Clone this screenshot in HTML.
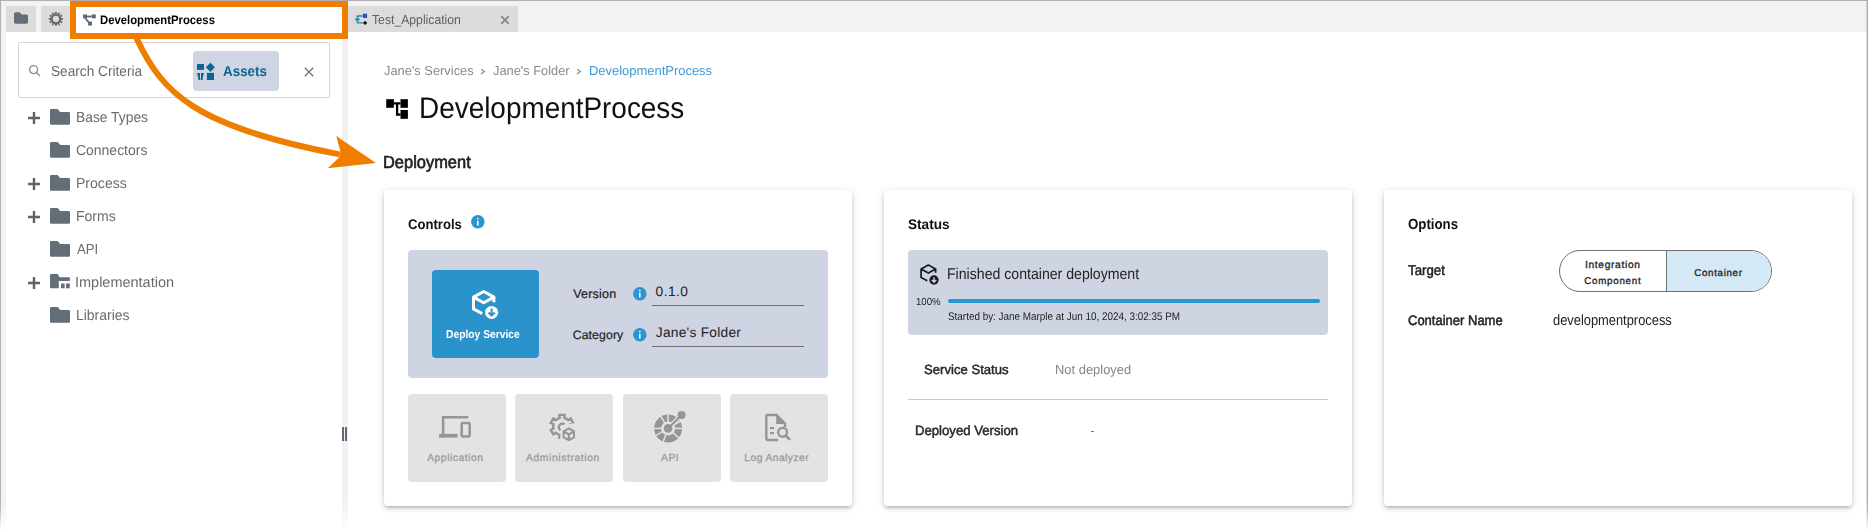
<!DOCTYPE html>
<html><head><meta charset="utf-8"><title>DevelopmentProcess</title>
<style>
html,body{margin:0;padding:0;}
body{width:1868px;height:529px;position:relative;overflow:hidden;background:#fff;font-family:'Liberation Sans', sans-serif;text-rendering:geometricPrecision;}
.a{position:absolute;box-sizing:border-box;}
.t{position:absolute;white-space:nowrap;line-height:1;font-family:'Liberation Sans', sans-serif;}
svg{position:absolute;overflow:visible;}
.card{position:absolute;background:#fff;border-radius:4px;box-shadow:0 3px 3px -2px rgba(0,0,0,.2),0 3px 4px 0 rgba(0,0,0,.14),0 1px 8px 0 rgba(0,0,0,.12);}
</style></head><body>

<div class="a" style="left:0;top:0;width:1868px;height:32px;background:#f2f2f2;"></div>
<div class="a" style="left:0;top:0;width:6px;height:529px;background:#f2f2f2;"></div>
<div class="a" style="left:6px;top:6px;width:30px;height:26px;background:#dcdcdc;"></div>
<div class="a" style="left:41px;top:6px;width:35px;height:26px;background:#dcdcdc;"></div>
<div class="a" style="left:70px;top:6px;width:278px;height:28px;background:#fff;"></div>
<div class="a" style="left:348px;top:6px;width:170px;height:26px;background:#dcdcdc;"></div>
<div class="a" style="left:342px;top:32px;width:6px;height:497px;background:#f1f1f1;"></div>
<div class="a" style="left:342px;top:427px;width:2px;height:14px;background:#5f6b78;"></div>
<div class="a" style="left:345px;top:427px;width:2px;height:14px;background:#5f6b78;"></div>
<div class="a" style="left:0;top:0;width:1868px;height:1px;background:#b2aeb2;"></div>
<div class="a" style="left:0;top:0;width:1px;height:529px;background:#b2aeb2;"></div>
<div class="a" style="left:1866px;top:0;width:1px;height:529px;background:rgba(110,100,110,0.22);"></div>
<div class="a" style="left:1867px;top:0;width:1px;height:529px;background:#aca8ac;"></div>
<svg style="left:14px;top:12.2px" width="14" height="12" viewBox="0 0 14 11.4"><path d="M1.5,0 H5.8 L7.6,2.3 H12.6 A1.4,1.4 0 0 1 14,3.7 V10 A1.4,1.4 0 0 1 12.6,11.4 H1.4 A1.4,1.4 0 0 1 0,10 V1.5 A1.5,1.5 0 0 1 1.5,0 Z" fill="#646e7a"/></svg>
<svg style="left:0;top:0" width="80" height="40"><path fill-rule="evenodd" d="M54.45,13.49 L55.08,13.36 L55.05,11.75 L56.75,11.75 L56.72,13.36 L57.35,13.49 L57.96,13.69 L58.74,12.28 L60.21,13.13 L59.38,14.51 L59.86,14.94 L60.29,15.42 L61.67,14.59 L62.52,16.06 L61.11,16.84 L61.31,17.45 L61.44,18.08 L63.05,18.05 L63.05,19.75 L61.44,19.72 L61.31,20.35 L61.11,20.96 L62.52,21.74 L61.67,23.21 L60.29,22.38 L59.86,22.86 L59.38,23.29 L60.21,24.67 L58.74,25.52 L57.96,24.11 L57.35,24.31 L56.72,24.44 L56.75,26.05 L55.05,26.05 L55.08,24.44 L54.45,24.31 L53.84,24.11 L53.06,25.52 L51.59,24.67 L52.42,23.29 L51.94,22.86 L51.51,22.38 L50.13,23.21 L49.28,21.74 L50.69,20.96 L50.49,20.35 L50.36,19.72 L48.75,19.75 L48.75,18.05 L50.36,18.08 L50.49,17.45 L50.69,16.84 L49.28,16.06 L50.13,14.59 L51.51,15.42 L51.94,14.94 L52.42,14.51 L51.59,13.13 L53.06,12.28 L53.84,13.69 Z M59.00,18.90 A3.1,3.1 0 1 0 52.80,18.90 A3.1,3.1 0 1 0 59.00,18.90 Z" fill="#6b6d6b"/></svg>
<svg style="left:83px;top:13.9px" width="13" height="12" viewBox="0 0 13 11.1">
<rect x="0" y="0" width="4" height="3.9" fill="#5f6a76"/><rect x="8.8" y="0" width="4" height="3.9" fill="#5f6a76"/>
<rect x="4" y="1.1" width="4.8" height="1.9" fill="#5f6a76"/><rect x="5.1" y="7.1" width="3.9" height="4" fill="#5f6a76"/>
<path d="M2.2,3.5 L6.2,8.4" stroke="#5f6a76" stroke-width="1.8"/></svg>
<div class="t" style="left:99.81px;top:14.00px;font-size:12.25px;font-weight:bold;color:#000;letter-spacing:0.000px;transform:scaleX(0.9224);transform-origin:0 0;">DevelopmentProcess</div>
<svg style="left:354px;top:12px" width="16" height="15" viewBox="0 0 16 15">
<path d="M3.4,5.5 V4 H8.6 M3.4,9.2 V10.9 H9" stroke="#3f74dc" stroke-width="1.4" fill="none"/>
<rect x="8.9" y="1.7" width="4.2" height="4.3" fill="#1f56d0"/>
<path d="M3.4,4.7 L6.1,7.4 L3.4,10.1 L0.7,7.4 Z" fill="#22a785"/>
<path d="M11.1,8.7 L13.3,10.9 L11.1,13.1 L8.9,10.9 Z" fill="#151515"/></svg>
<div class="t" style="left:371.97px;top:13.00px;font-size:13.0px;font-weight:normal;color:#5e5e5e;letter-spacing:0.000px;transform:scaleX(0.9389);transform-origin:0 0;">Test_Application</div>
<svg style="left:500px;top:15px" width="10" height="10" viewBox="0 0 10 10"><path d="M1.2,1.2 L8.8,8.8 M8.8,1.2 L1.2,8.8" stroke="#838a93" stroke-width="1.9"/></svg>
<div class="a" style="left:18px;top:42px;width:312px;height:56px;border:1px solid #d4d4d6;border-radius:2px;"></div>
<svg style="left:28px;top:64px" width="14" height="14" viewBox="0 0 14 14"><circle cx="5.6" cy="5.6" r="4.0" stroke="#8b9099" stroke-width="1.4" fill="none"/><path d="M8.5,8.5 L12,12" stroke="#8b9099" stroke-width="1.5"/></svg>
<div class="t" style="left:50.91px;top:65.00px;font-size:14.5px;font-weight:normal;color:#6b6b6b;letter-spacing:0.000px;transform:scaleX(0.9425);transform-origin:0 0;">Search Criteria</div>
<div class="a" style="left:193px;top:51px;width:86px;height:40px;background:#cfd5e3;border-radius:4px;"></div>
<svg style="left:197px;top:62px" width="18" height="18" viewBox="0 0 18 18">
<rect x="0" y="2" width="7" height="5.9" fill="#0e6494"/>
<path d="M13.4,0.7 L17.95,5.3 L13.4,9.9 L8.85,5.3 Z" fill="#0e6494"/>
<rect x="9.9" y="10.9" width="7.1" height="7.1" fill="#0e6494"/>
<path d="M0,11 H3 Q2.9,14.5 3.2,18 H1.4 Q1.3,14.5 0,11 Z M7,11 H4 Q4.1,14.5 3.8,18 H5.6 Q5.7,14.5 7,11 Z" fill="#0e6494"/>
</svg>
<div class="t" style="left:223.25px;top:65.00px;font-size:14.25px;font-weight:bold;color:#0e6494;letter-spacing:0.000px;transform:scaleX(0.9417);transform-origin:0 0;">Assets</div>
<svg style="left:304px;top:67px" width="10" height="10" viewBox="0 0 10 10"><path d="M0.8,0.8 L9.2,9.2 M9.2,0.8 L0.8,9.2" stroke="#737373" stroke-width="1.3"/></svg>
<svg style="left:28px;top:111.5px" width="12" height="12" viewBox="0 0 12 12"><path d="M6,0 V12 M0,6 H12" stroke="#626262" stroke-width="2.4"/></svg>
<svg style="left:50px;top:109px" width="20" height="16" viewBox="0 0 20 16"><path d="M1.2,0 H7.6 L10.2,3 H18.8 A1.2,1.2 0 0 1 20,4.2 V14.6 A1.2,1.2 0 0 1 18.8,15.8 H1.2 A1.2,1.2 0 0 1 0,14.6 V1.2 A1.2,1.2 0 0 1 1.2,0 Z" fill="#646e78"/></svg>
<div class="t" style="left:75.78px;top:111.00px;font-size:14.5px;font-weight:normal;color:#6b6b6b;letter-spacing:0.000px;transform:scaleX(0.9536);transform-origin:0 0;">Base Types</div>
<svg style="left:50px;top:142px" width="20" height="16" viewBox="0 0 20 16"><path d="M1.2,0 H7.6 L10.2,3 H18.8 A1.2,1.2 0 0 1 20,4.2 V14.6 A1.2,1.2 0 0 1 18.8,15.8 H1.2 A1.2,1.2 0 0 1 0,14.6 V1.2 A1.2,1.2 0 0 1 1.2,0 Z" fill="#646e78"/></svg>
<div class="t" style="left:76.13px;top:144.00px;font-size:14.5px;font-weight:normal;color:#6b6b6b;letter-spacing:0.000px;transform:scaleX(0.9626);transform-origin:0 0;">Connectors</div>
<svg style="left:28px;top:177.5px" width="12" height="12" viewBox="0 0 12 12"><path d="M6,0 V12 M0,6 H12" stroke="#626262" stroke-width="2.4"/></svg>
<svg style="left:50px;top:175px" width="20" height="16" viewBox="0 0 20 16"><path d="M1.2,0 H7.6 L10.2,3 H18.8 A1.2,1.2 0 0 1 20,4.2 V14.6 A1.2,1.2 0 0 1 18.8,15.8 H1.2 A1.2,1.2 0 0 1 0,14.6 V1.2 A1.2,1.2 0 0 1 1.2,0 Z" fill="#646e78"/></svg>
<div class="t" style="left:75.76px;top:177.00px;font-size:14.5px;font-weight:normal;color:#6b6b6b;letter-spacing:0.000px;transform:scaleX(0.9685);transform-origin:0 0;">Process</div>
<svg style="left:28px;top:210.5px" width="12" height="12" viewBox="0 0 12 12"><path d="M6,0 V12 M0,6 H12" stroke="#626262" stroke-width="2.4"/></svg>
<svg style="left:50px;top:208px" width="20" height="16" viewBox="0 0 20 16"><path d="M1.2,0 H7.6 L10.2,3 H18.8 A1.2,1.2 0 0 1 20,4.2 V14.6 A1.2,1.2 0 0 1 18.8,15.8 H1.2 A1.2,1.2 0 0 1 0,14.6 V1.2 A1.2,1.2 0 0 1 1.2,0 Z" fill="#646e78"/></svg>
<div class="t" style="left:75.76px;top:210.00px;font-size:14.5px;font-weight:normal;color:#6b6b6b;letter-spacing:0.000px;transform:scaleX(0.9658);transform-origin:0 0;">Forms</div>
<svg style="left:50px;top:241px" width="20" height="16" viewBox="0 0 20 16"><path d="M1.2,0 H7.6 L10.2,3 H18.8 A1.2,1.2 0 0 1 20,4.2 V14.6 A1.2,1.2 0 0 1 18.8,15.8 H1.2 A1.2,1.2 0 0 1 0,14.6 V1.2 A1.2,1.2 0 0 1 1.2,0 Z" fill="#646e78"/></svg>
<div class="t" style="left:76.85px;top:243.00px;font-size:14.5px;font-weight:normal;color:#6b6b6b;letter-spacing:0.000px;transform:scaleX(0.9062);transform-origin:0 0;">API</div>
<svg style="left:28px;top:276.5px" width="12" height="12" viewBox="0 0 12 12"><path d="M6,0 V12 M0,6 H12" stroke="#626262" stroke-width="2.4"/></svg>
<svg style="left:50px;top:274.3px" width="20" height="16" viewBox="0 0 20 16"><path d="M1.2,0 H7.6 L9.6,3.2 H19.8 V7 H8.8 V14.2 H1.2 A1.2,1.2 0 0 1 0,13 V1.2 A1.2,1.2 0 0 1 1.2,0 Z" fill="#646e78"/><rect x="11" y="9.5" width="3.6" height="4.8" fill="#646e78"/><rect x="16" y="9.5" width="3.8" height="4.8" fill="#646e78"/></svg>
<div class="t" style="left:75.48px;top:276.00px;font-size:14.5px;font-weight:normal;color:#6b6b6b;letter-spacing:0.000px;transform:scaleX(0.9987);transform-origin:0 0;">Implementation</div>
<svg style="left:50px;top:307px" width="20" height="16" viewBox="0 0 20 16"><path d="M1.2,0 H7.6 L10.2,3 H18.8 A1.2,1.2 0 0 1 20,4.2 V14.6 A1.2,1.2 0 0 1 18.8,15.8 H1.2 A1.2,1.2 0 0 1 0,14.6 V1.2 A1.2,1.2 0 0 1 1.2,0 Z" fill="#646e78"/></svg>
<div class="t" style="left:75.77px;top:309.00px;font-size:14.5px;font-weight:normal;color:#6b6b6b;letter-spacing:0.000px;transform:scaleX(0.9620);transform-origin:0 0;">Libraries</div>
<svg style="left:0;top:0" width="1868" height="529">
<rect x="73" y="4" width="272" height="32" fill="none" stroke="#ef7d00" stroke-width="6"/>
<path d="M135.5,36 L136.9,39 C162.49,93.2 194.99,126.74 339.8,154.4" fill="none" stroke="#ef7d00" stroke-width="6"/>
<path d="M376,163.1 L336.2,135.9 L340.5,151.7 L339.1,157.4 L327.7,168.3 Z" fill="#ef7d00"/>
</svg>
<div class="t" style="left:383.75px;top:64.00px;font-size:13.0px;font-weight:normal;color:#8a8a8a;letter-spacing:0.000px;transform:scaleX(0.9892);transform-origin:0 0;">Jane's Services</div>
<svg style="left:480px;top:68px" width="7" height="8" viewBox="0 0 7 8"><path d="M1.1,1.3 L4.4,3.6 L1.1,5.9" stroke="#8a8f96" stroke-width="1.25" fill="none"/></svg>
<div class="t" style="left:493.05px;top:64.00px;font-size:13.0px;font-weight:normal;color:#8a8a8a;letter-spacing:0.000px;transform:scaleX(0.9867);transform-origin:0 0;">Jane's Folder</div>
<svg style="left:576px;top:68px" width="7" height="8" viewBox="0 0 7 8"><path d="M1.1,1.3 L4.4,3.6 L1.1,5.9" stroke="#8a8f96" stroke-width="1.25" fill="none"/></svg>
<div class="t" style="left:588.50px;top:64.00px;font-size:13.0px;font-weight:normal;color:#3b9ad2;letter-spacing:0.000px;transform:scaleX(0.9957);transform-origin:0 0;">DevelopmentProcess</div>
<svg style="left:386px;top:99px" width="22" height="20" viewBox="0 0 22 20">
<rect x="0.2" y="0.2" width="7.7" height="8.6" fill="#000"/><rect x="14.5" y="0.2" width="7.4" height="8.6" fill="#000"/>
<rect x="14.5" y="11" width="7.4" height="8.8" fill="#000"/>
<path d="M7.9,4.3 H14.5 M11.1,4.3 V15.7 H14.5" stroke="#000" stroke-width="2.3" fill="none"/></svg>
<div class="t" style="left:419.37px;top:94.00px;font-size:29.75px;font-weight:normal;color:#111;letter-spacing:0.000px;transform:scaleX(0.9382);transform-origin:0 0;">DevelopmentProcess</div>
<div class="t" style="left:383.21px;top:154.00px;font-size:17.5px;font-weight:normal;color:#222;letter-spacing:0.000px;-webkit-text-stroke:0.65px #222;transform:scaleX(0.9393);transform-origin:0 0;">Deployment</div>
<div class="card" style="left:384px;top:190px;width:468px;height:316px;"></div>
<div class="card" style="left:884px;top:190px;width:468px;height:316px;"></div>
<div class="card" style="left:1384px;top:190px;width:468px;height:316px;"></div>
<div class="t" style="left:408.13px;top:217.00px;font-size:14.0px;font-weight:bold;color:#111;letter-spacing:0.000px;transform:scaleX(0.9363);transform-origin:0 0;">Controls</div>
<svg style="left:471.2px;top:215.2px" width="13.6" height="13.6" viewBox="-7 -7 14 14"><circle cx="0" cy="0" r="7" fill="#2b95d0"/><rect x="-0.8" y="-1.1" width="1.6" height="4.9" fill="#fff"/><circle cx="0" cy="-3.3" r="0.95" fill="#fff"/></svg>
<div class="a" style="left:408px;top:250px;width:420px;height:127.5px;background:#cfd4e2;border-radius:4px;"></div>
<div class="a" style="left:432px;top:270px;width:107px;height:87.5px;background:#2b93cb;border-radius:4px;"></div>
<svg style="left:472.3px;top:289.8px" width="30" height="32" viewBox="0 0 30 32"><path d="M1.5,7.1 L11.7,1.5 L21.9,7.1 L11.7,12.7 Z M1.5,7.1 V18.9 L10.2,23.6 M21.9,7.1 V12.2" stroke="#fff" stroke-width="3" fill="none" stroke-linejoin="round"/><circle cx="19.6" cy="22.4" r="6.5" fill="#fff"/><path d="M19.6,18.6 V25.4 M16.5,22.5 L19.6,25.6 L22.7,22.5" stroke="#2b93cb" stroke-width="2" fill="none"/></svg>
<div class="t" style="left:446.33px;top:330.00px;font-size:11.5px;font-weight:bold;color:#fff;letter-spacing:0.000px;transform:scaleX(0.8946);transform-origin:0 0;">Deploy Service</div>
<div class="t" style="left:573.17px;top:288.00px;font-size:12.5px;font-weight:normal;color:#222;letter-spacing:0.208px;-webkit-text-stroke:0.2px #222;">Version</div>
<svg style="left:633.2px;top:287.0px" width="13.6" height="13.6" viewBox="-7 -7 14 14"><circle cx="0" cy="0" r="7" fill="#2b95d0"/><rect x="-0.8" y="-1.1" width="1.6" height="4.9" fill="#fff"/><circle cx="0" cy="-3.3" r="0.95" fill="#fff"/></svg>
<div class="t" style="left:655.60px;top:285.00px;font-size:13.75px;font-weight:normal;color:#222;letter-spacing:0.425px;">0.1.0</div>
<div class="a" style="left:652px;top:305px;width:152px;height:1.3px;background:#6e6e72;"></div>
<div class="t" style="left:572.67px;top:329.00px;font-size:12.25px;font-weight:normal;color:#222;letter-spacing:0.125px;-webkit-text-stroke:0.2px #222;">Category</div>
<svg style="left:633.2px;top:328.2px" width="13.6" height="13.6" viewBox="-7 -7 14 14"><circle cx="0" cy="0" r="7" fill="#2b95d0"/><rect x="-0.8" y="-1.1" width="1.6" height="4.9" fill="#fff"/><circle cx="0" cy="-3.3" r="0.95" fill="#fff"/></svg>
<div class="t" style="left:655.75px;top:326.00px;font-size:13.75px;font-weight:normal;color:#222;letter-spacing:0.256px;">Jane's Folder</div>
<div class="a" style="left:652px;top:346px;width:152px;height:1.3px;background:#6e6e72;"></div>
<div class="a" style="left:408px;top:394px;width:98px;height:88px;background:#e3e3e3;border-radius:4px;"></div>
<div class="t" style="left:427.20px;top:454.00px;font-size:10.25px;font-weight:normal;color:#9c9c9c;letter-spacing:0.570px;-webkit-text-stroke:0.3px #9c9c9c;">Application</div>
<div class="a" style="left:515px;top:394px;width:98px;height:88px;background:#e3e3e3;border-radius:4px;"></div>
<div class="t" style="left:526.00px;top:454.00px;font-size:10.25px;font-weight:normal;color:#9c9c9c;letter-spacing:0.635px;-webkit-text-stroke:0.3px #9c9c9c;">Administration</div>
<div class="a" style="left:623px;top:394px;width:98px;height:88px;background:#e3e3e3;border-radius:4px;"></div>
<div class="t" style="left:660.90px;top:454.00px;font-size:10.25px;font-weight:normal;color:#9c9c9c;letter-spacing:0.650px;-webkit-text-stroke:0.3px #9c9c9c;">API</div>
<div class="a" style="left:730px;top:394px;width:98px;height:88px;background:#e3e3e3;border-radius:4px;"></div>
<div class="t" style="left:744.33px;top:454.00px;font-size:10.25px;font-weight:normal;color:#9c9c9c;letter-spacing:0.450px;-webkit-text-stroke:0.3px #9c9c9c;">Log Analyzer</div>
<svg style="left:439px;top:416px" width="33" height="22" viewBox="0 0 33 22">
<path d="M4.1,1.2 H29.2 M4.1,0 V18" stroke="#959595" stroke-width="2.5" fill="none"/>
<rect x="0" y="17.9" width="18.5" height="3.7" fill="#959595"/>
<rect x="22.7" y="7.1" width="8.0" height="13.3" rx="1" stroke="#959595" stroke-width="2.5" fill="none"/></svg>
<svg style="left:0;top:0" width="1868" height="529">
<defs><clipPath id="admclip"><path d="M540,400 H590 V450 H540 Z M561,425 L576,423 L578,441 L560,443 Z" clip-rule="evenodd"/></clipPath></defs>
<g clip-path="url(#admclip)"><path d="M557.60,418.78 L559.61,417.93 L559.43,414.88 L564.57,414.88 L564.39,417.93 L566.40,418.78 L568.14,420.10 L570.69,418.41 L573.26,422.87 L570.53,424.23 L570.80,426.40 L570.53,428.57 L573.26,429.93 L570.69,434.39 L568.14,432.70 L566.40,434.02 L564.39,434.87 L564.57,437.92 L559.43,437.92 L559.61,434.87 L557.60,434.02 L555.86,432.70 L553.31,434.39 L550.74,429.93 L553.47,428.57 L553.20,426.40 L553.47,424.23 L550.74,422.87 L553.31,418.41 L555.86,420.10 Z" stroke="#959595" stroke-width="2.4" fill="none" stroke-linejoin="miter"/></g>
<path d="M564.63,424.44 A3.55,3.55 0 1 0 560.57,430.24" stroke="#959595" stroke-width="2.3" fill="none"/>
<path d="M568.8,428.4 L574,431.3 V437.3 L568.8,440.2 L563.6,437.3 V431.3 Z M563.6,431.3 L568.8,434.3 L574,431.3 M568.8,434.3 V440.2" stroke="#959595" stroke-width="2" fill="none" stroke-linejoin="round"/>
</svg>
<svg style="left:0;top:0" width="1868" height="529"><defs><mask id="apimask"><rect x="640" y="400" width="60" height="60" fill="#fff"/><path d="M668.1,428.4 L657.80,411.26" stroke="#000" stroke-width="1.5"/><path d="M668.1,428.4 L668.10,408.40" stroke="#000" stroke-width="1.5"/><path d="M668.1,428.4 L685.42,418.40" stroke="#000" stroke-width="1.5"/><path d="M668.1,428.4 L688.10,428.40" stroke="#000" stroke-width="1.5"/><path d="M668.1,428.4 L682.96,441.78" stroke="#000" stroke-width="1.5"/><path d="M668.1,428.4 L661.26,447.19" stroke="#000" stroke-width="1.5"/><path d="M668.1,428.4 L650.78,438.40" stroke="#000" stroke-width="1.5"/><path d="M668.1,428.4 L648.10,428.40" stroke="#000" stroke-width="1.5"/><circle cx="668.1" cy="428.4" r="7" fill="#000"/><path d="M672.5,424 L684,412.5" stroke="#000" stroke-width="4.4"/></mask></defs><circle cx="668.1" cy="428.6" r="14" fill="#959595" mask="url(#apimask)"/><circle cx="668.1" cy="428.4" r="4.3" fill="#959595"/><path d="M668.1,428.4 L681.8,414.8" stroke="#959595" stroke-width="2.1"/><circle cx="681.6" cy="414.9" r="4.0" fill="#959595"/></svg>
<svg style="left:0;top:0" width="1868" height="529">
<path d="M778,440 H767.5 A1.2,1.2 0 0 1 766.3,438.8 V416.2 A1.2,1.2 0 0 1 767.5,415 H776.5 L785,423.5 V427" stroke="#959595" stroke-width="2.4" fill="none"/>
<path d="M776.2,414.5 L785.6,423.9 H776.2 Z" fill="#959595"/>
<rect x="770" y="427" width="4" height="2.2" fill="#959595"/><rect x="770" y="432" width="4" height="2.2" fill="#959595"/>
<circle cx="782.6" cy="432.3" r="4.4" stroke="#959595" stroke-width="2.4" fill="none"/>
<path d="M785.8,435.6 L790,439.8" stroke="#959595" stroke-width="2.6"/>
</svg>
<div class="t" style="left:908.04px;top:217.00px;font-size:14.0px;font-weight:bold;color:#111;letter-spacing:0.000px;transform:scaleX(0.9719);transform-origin:0 0;">Status</div>
<div class="a" style="left:908px;top:250px;width:420px;height:84.5px;background:#cfd4e2;border-radius:4px;"></div>
<svg style="left:919.5px;top:264.2px" width="21.419999999999998" height="22.848" viewBox="0 0 30 32"><path d="M1.5,7.1 L11.7,1.5 L21.9,7.1 L11.7,12.7 Z M1.5,7.1 V18.9 L10.2,23.6 M21.9,7.1 V12.2" stroke="#1a1a1a" stroke-width="2.4" fill="none" stroke-linejoin="round"/><circle cx="19.6" cy="22.4" r="6.5" fill="#1a1a1a"/><path d="M19.6,18.6 V25.4 M16.5,22.5 L19.6,25.6 L22.7,22.5" stroke="#cfd4e2" stroke-width="2" fill="none"/></svg>
<div class="t" style="left:947.26px;top:267.00px;font-size:15.5px;font-weight:normal;color:#222;letter-spacing:0.000px;transform:scaleX(0.9101);transform-origin:0 0;">Finished container deployment</div>
<div class="t" style="left:915.80px;top:298.00px;font-size:10.25px;font-weight:normal;color:#222;letter-spacing:0.000px;transform:scaleX(0.9393);transform-origin:0 0;">100%</div>
<div class="a" style="left:948px;top:299px;width:372px;height:4px;background:#2796d3;border-radius:2px;"></div>
<div class="t" style="left:948.15px;top:312.00px;font-size:11.0px;font-weight:normal;color:#222;letter-spacing:0.000px;transform:scaleX(0.8994);transform-origin:0 0;">Started by: Jane Marple at Jun 10, 2024, 3:02:35 PM</div>
<div class="t" style="left:924.48px;top:363.00px;font-size:13.25px;font-weight:normal;color:#2a2a2a;letter-spacing:0.000px;-webkit-text-stroke:0.5px #2a2a2a;transform:scaleX(0.9899);transform-origin:0 0;">Service Status</div>
<div class="t" style="left:1054.60px;top:363.00px;font-size:13.25px;font-weight:normal;color:#858585;letter-spacing:0.000px;transform:scaleX(0.9760);transform-origin:0 0;">Not deployed</div>
<div class="a" style="left:908px;top:399px;width:420px;height:1px;background:#c9c9cf;"></div>
<div class="t" style="left:915.30px;top:424.00px;font-size:13.5px;font-weight:normal;color:#2a2a2a;letter-spacing:0.000px;-webkit-text-stroke:0.5px #2a2a2a;transform:scaleX(0.9735);transform-origin:0 0;">Deployed Version</div>
<div class="a" style="left:1091.4px;top:431px;width:3px;height:1px;background:#777;"></div>
<div class="t" style="left:1407.74px;top:218.00px;font-size:14.75px;font-weight:bold;color:#111;letter-spacing:0.000px;transform:scaleX(0.8991);transform-origin:0 0;">Options</div>
<div class="t" style="left:1408.07px;top:264.00px;font-size:14.25px;font-weight:normal;color:#222;letter-spacing:0.000px;-webkit-text-stroke:0.5px #222;transform:scaleX(0.9299);transform-origin:0 0;">Target</div>
<div class="a" style="left:1559px;top:250px;width:213px;height:42px;border:1px solid #6e6e78;border-radius:21px;overflow:hidden;background:#fff;"><div class="a" style="left:106px;top:0;width:106px;height:40px;background:#d5e8f5;border-left:1px solid #6e6e78;"></div></div>
<div class="t" style="left:1584.92px;top:261.00px;font-size:10.25px;font-weight:normal;color:#222;letter-spacing:0.662px;-webkit-text-stroke:0.3px #222;">Integration</div>
<div class="t" style="left:1584.30px;top:277.00px;font-size:9.75px;font-weight:normal;color:#222;letter-spacing:0.741px;-webkit-text-stroke:0.3px #222;">Component</div>
<div class="t" style="left:1694.30px;top:269.00px;font-size:9.75px;font-weight:normal;color:#222;letter-spacing:0.672px;-webkit-text-stroke:0.3px #222;">Container</div>
<div class="t" style="left:1407.71px;top:314.00px;font-size:13.75px;font-weight:normal;color:#222;letter-spacing:0.000px;-webkit-text-stroke:0.5px #222;transform:scaleX(0.9456);transform-origin:0 0;">Container Name</div>
<div class="t" style="left:1552.85px;top:314.00px;font-size:14.75px;font-weight:normal;color:#222;letter-spacing:0.000px;transform:scaleX(0.8726);transform-origin:0 0;">developmentprocess</div>
<div class="a" style="left:0;top:499px;width:1868px;height:30px;background:linear-gradient(to bottom, rgba(255,255,255,0) 0%, rgba(255,255,255,0.25) 40%, rgba(255,255,255,0.95) 100%);"></div>
</body></html>
